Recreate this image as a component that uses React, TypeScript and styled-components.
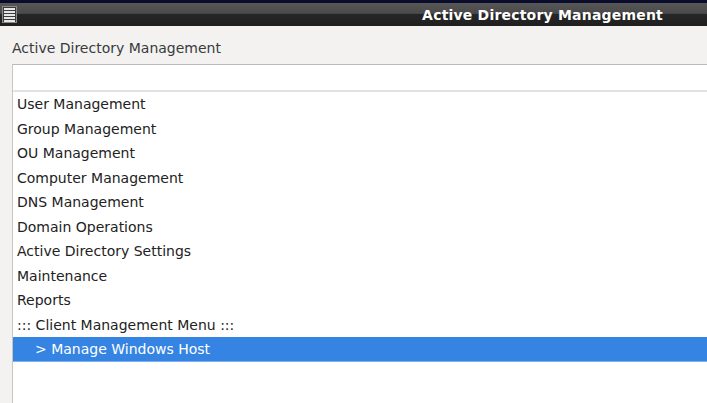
import React from 'react';
import styled, { createGlobalStyle } from 'styled-components';

const GlobalStyle = createGlobalStyle`
  html, body {
    margin: 0;
    padding: 0;
    background: #f3f2f0;
    font-family: "DejaVu Sans", "Liberation Sans", sans-serif;
  }
`

const Window = styled.div`
  width: 707px;
  height: 403px;
  display: flex;
  flex-direction: column;
  overflow: hidden;
  background: #f3f2f0;
`

const TopStrip = styled.div`
  height: 3px;
  background: #0b0b2c;
`

const TitleBar = styled.div`
  height: 23px;
  display: flex;
  align-items: center;
  justify-content: space-between;
  padding: 0 44px 0 2px;
  background: linear-gradient(#575757 0%, #4a4a4a 45%, #262626 50%, #1f1f1f 100%);
`

const TitleText = styled.span`
  color: #ffffff;
  font-weight: bold;
  font-size: 14px;
  letter-spacing: 0.2px;
`

const Body = styled.div`
  flex: 1;
  display: flex;
  flex-direction: column;
  padding: 14px 0 0 12px;
`

const Label = styled.div`
  font-size: 14px;
  line-height: 16px;
  color: #363b3d;
  height: 24px;
`

const ListBox = styled.div`
  flex: 1;
  background: #ffffff;
  border-top: 1px solid #bcb8b2;
  border-left: 1px solid #c9c5bf;
  display: flex;
  flex-direction: column;
`

const HeaderRow = styled.div`
  height: 25px;
  border-bottom: 2px solid #e4e2df;
`

const Row = styled.div<{ $selected?: boolean; $indent?: boolean }>`
  height: 24.5px;
  display: flex;
  align-items: center;
  padding-left: ${p => (p.$indent ? '22px' : '4px')};
  font-size: 14px;
  color: ${p => (p.$selected ? '#ffffff' : '#222222')};
  background: ${p => (p.$selected ? '#3584e4' : 'transparent')};
  border-bottom: ${p => (p.$selected ? '1.5px solid #7eb0ef' : 'none')};
  box-sizing: border-box;
`

const MenuIcon = () => (
  <svg width="15" height="17" viewBox="0 0 15 17">
    <rect x="0.5" y="0.5" width="14" height="16" fill="#3a3a3a" stroke="#8a8a8a" />
    {[2, 5, 8, 11, 14].map(y => (
      <rect key={y} x="2" y={y} width="11" height="2" fill="#e6e6e6" />
    ))}
  </svg>
)

const items = [
  'User Management',
  'Group Management',
  'OU Management',
  'Computer Management',
  'DNS Management',
  'Domain Operations',
  'Active Directory Settings',
  'Maintenance',
  'Reports',
  '::: Client Management Menu :::',
]

const App = () => {
  return (
    <Window>
      <GlobalStyle />
      <TopStrip />
      <TitleBar>
        <MenuIcon />
        <TitleText>Active Directory Management</TitleText>
      </TitleBar>
      <Body>
        <Label>Active Directory Management</Label>
        <ListBox>
          <HeaderRow />
          {items.map(item => (
            <Row key={item}>{item}</Row>
          ))}
          <Row $selected $indent>&gt; Manage Windows Host</Row>
        </ListBox>
      </Body>
    </Window>
  );
}

export default App;
